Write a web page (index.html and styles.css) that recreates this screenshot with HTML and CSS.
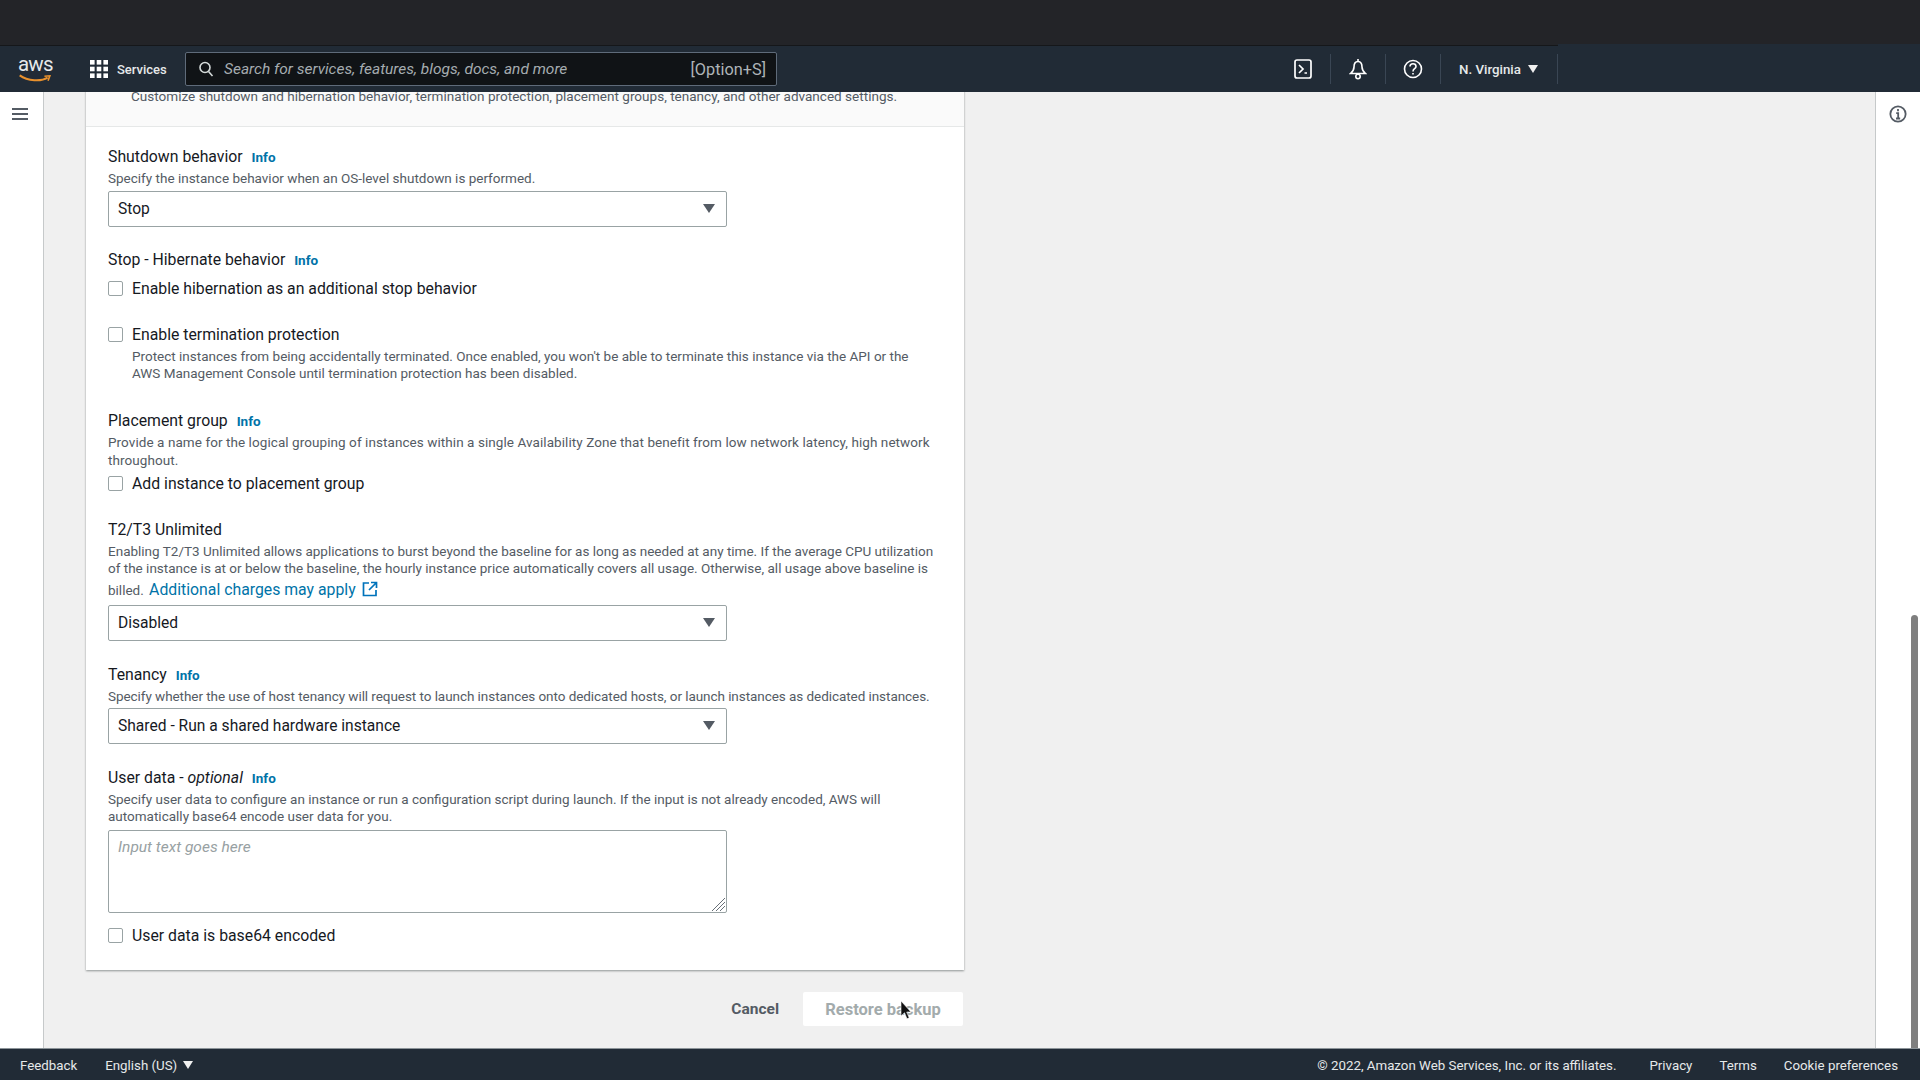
FILE: index.html
```html
<!DOCTYPE html>
<html lang="en">
<head>
<meta charset="utf-8">
<title>Restore backup</title>
<link rel="stylesheet" href="styles.css">
</head>
<body>
<div class="chrome"></div>
<header class="nav">
  <div class="logo">
    <span class="logo-text">aws</span>
    <svg class="smile" viewBox="0 0 36 10" width="34" height="9"><path d="M1 1.500C10 8 25 8.500 32 4" fill="none" stroke="#e8912d" stroke-width="2.200"/><path d="M28.500 2.500L34.500 2L32.500 7.500" fill="none" stroke="#e8912d" stroke-width="1.800"/></svg>
  </div>
  <div class="services">
    <svg class="grid-icon" viewBox="0 0 18 18" width="18" height="18" fill="#fff"><rect x="0" y="0" width="4.600" height="4.600"/><rect x="6.700" y="0" width="4.600" height="4.600"/><rect x="13.400" y="0" width="4.600" height="4.600"/><rect x="0" y="6.700" width="4.600" height="4.600"/><rect x="6.700" y="6.700" width="4.600" height="4.600"/><rect x="13.400" y="6.700" width="4.600" height="4.600"/><rect x="0" y="13.400" width="4.600" height="4.600"/><rect x="6.700" y="13.400" width="4.600" height="4.600"/><rect x="13.400" y="13.400" width="4.600" height="4.600"/></svg>
    <span>Services</span>
  </div>
  <div class="search">
    <svg viewBox="0 0 16 16" width="16" height="16" fill="none" stroke="#d5dbdb" stroke-width="1.600"><circle cx="7" cy="6.500" r="5"/><path d="M10.500 10.500L14.500 15"/></svg>
    <span class="search-text">Search for services, features, blogs, docs, and more</span>
    <span class="search-key">[Option+S]</span>
  </div>
  <div class="nav-right">
    <div class="nav-cell">
      <svg viewBox="0 0 18 20" width="18" height="20" fill="none" stroke="#fff" stroke-width="1.700"><rect x="1" y="1" width="16" height="18" rx="2"/><path d="M5 6l4 4-4 4M10.500 14h2.500"/></svg>
    </div>
    <div class="nav-cell">
      <svg viewBox="0 0 18 22" width="18" height="22" fill="none" stroke="#fff" stroke-width="1.600"><path d="M9 1v2.500M9 3.500C6 3.500 5 6 5 9c0 2.500-1.200 4.500-3.500 6.500h15C14.200 13.500 13 11.500 13 9c0-3-1-5.500-4-5.500z"/><circle cx="9" cy="18.500" r="2.200"/></svg>
    </div>
    <div class="nav-cell">
      <svg viewBox="0 0 20 20" width="20" height="20" fill="none" stroke="#fff" stroke-width="1.600"><circle cx="10" cy="10" r="8.500"/><path d="M7 7.500C7 5.500 8.500 4.800 10 4.800s3 .9 3 2.600c0 2.400-3 2.300-3 5"/><path d="M10 14v1.600"/></svg>
    </div>
    <div class="region"><span>N. Virginia</span><i class="tri tri-light"></i></div>
  </div>
</header>
<div class="body">
  <aside class="side">
    <svg viewBox="0 0 16 14" width="16" height="14" fill="none" stroke="#545b64" stroke-width="2"><path d="M0 2h16M0 7h16M0 12h16"/></svg>
  </aside>
  <main class="main">
    <section class="card">
      <div class="card-head">Customize shutdown and hibernation behavior, termination protection, placement groups, tenancy, and other advanced settings.</div>
      <div class="card-body">
        <div class="label">Shutdown behavior <a class="info">Info</a></div>
        <p class="desc">Specify the instance behavior when an OS-level shutdown is performed.</p>
        <div class="select"><span>Stop</span><i class="tri"></i></div>

        <div class="label gap-stop">Stop - Hibernate behavior <a class="info">Info</a></div>
        <label class="check check-tight"><i class="box"></i><span>Enable hibernation as an additional stop behavior</span></label>

        <label class="check check-solo"><i class="box"></i><span>Enable termination protection</span></label>
        <p class="desc desc-in">Protect instances from being accidentally terminated. Once enabled, you won't be able to terminate this instance via the API or the AWS Management Console until termination protection has been disabled.</p>

        <div class="label gap-lg">Placement group <a class="info">Info</a></div>
        <p class="desc desc-wide">Provide a name for the logical grouping of instances within a single Availability Zone that benefit from low network latency, high network throughout.</p>
        <label class="check check-small"><i class="box"></i><span>Add instance to placement group</span></label>

        <div class="label gap-t2">T2/T3 Unlimited</div>
        <p class="desc">Enabling T2/T3 Unlimited allows applications to burst beyond the baseline for as long as needed at any time. If the average CPU utilization of the instance is at or below the baseline, the hourly instance price automatically covers all usage. Otherwise, all usage above baseline is billed. <a class="ext">Additional charges may apply <svg viewBox="0 0 16 16" width="16" height="16" fill="none" stroke="#0073bb" stroke-width="1.700"><path d="M7 2H1.500v12.500H14V9M9 1.500h5.500V7M14.500 1.500L7 9"/></svg></a></p>
        <div class="select"><span>Disabled</span><i class="tri"></i></div>

        <div class="label gap">Tenancy <a class="info">Info</a></div>
        <p class="desc desc-tight">Specify whether the use of host tenancy will request to launch instances onto dedicated hosts, or launch instances as dedicated instances.</p>
        <div class="select select-tight"><span>Shared - Run a shared hardware instance</span><i class="tri"></i></div>

        <div class="label gap">User data - <em>optional</em> <a class="info">Info</a></div>
        <p class="desc">Specify user data to configure an instance or run a configuration script during launch. If the input is not already encoded, AWS will automatically base64 encode user data for you.</p>
        <div class="textarea"><span>Input text goes here</span>
          <svg class="grip" viewBox="0 0 14 14" width="14" height="14" stroke="#687078" stroke-width="1"><path d="M1 14L14 1M5 14l9-9M9 14l5-5"/></svg>
        </div>
        <label class="check check-small2"><i class="box"></i><span>User data is base64 encoded</span></label>
      </div>
    </section>
    <div class="actions">
      <a class="cancel">Cancel</a>
      <div class="restore">Restore backup</div>
    </div>
    <svg class="cursor" viewBox="0 0 12 20" width="12" height="20"><path d="M1 1v15l3.500-3.200 2.500 6 2.200-1-2.500-5.800H11z" fill="#111" stroke="#fff" stroke-width=".6"/></svg>
  </main>
  <aside class="rail">
    <svg viewBox="0 0 20 20" width="18" height="18" fill="none" stroke="#545b64" stroke-width="2"><circle cx="10" cy="10" r="8.500"/><path d="M10 4.500v2.500M8 9h2.200v6M7.800 15h4.600"/></svg>
    <div class="scrollbar"></div>
  </aside>
</div>
<footer class="foot">
  <div class="foot-left"><span>Feedback</span><span class="lang">English (US) <i class="tri tri-light tri-small"></i></span></div>
  <div class="foot-right"><span>© 2022, Amazon Web Services, Inc. or its affiliates.</span><span>Privacy</span><span>Terms</span><span>Cookie preferences</span></div>
</footer>
</body>
</html>
```
FILE: styles.css
```css
* { box-sizing: border-box; }
html, body { margin: 0; height: 100%; }
body {
  display: flex;
  flex-direction: column;
  height: 1080px;
  overflow: hidden;
  font-family: Roboto, "Liberation Sans", sans-serif;
  color: #16191f;
  background: #f0f0f0;
}
.chrome { height: 46px; flex: none; background: #232428; border-bottom: 1px solid #15171a; }
.nav {
  height: 46px;
  flex: none;
  display: flex;
  align-items: center;
  background: #212b36;
  color: #fff;
  position: relative;
  padding-left: 18px;
}
.nav::after {
  content: "";
  position: absolute;
  left: 1558px;
  right: 0;
  top: -2px;
  height: 2px;
  background: #212b36;
}
.logo { width: 72px; display: flex; flex-direction: column; line-height: 1; }
.logo-text { font-size: 20.500px; color: #e6e9ea; line-height: 17px; letter-spacing: -.8px; }
.smile { margin-top: 1px; display: block; }
.services { display: flex; align-items: center; gap: 9px; width: 95px; font-size: 13px; font-weight: 500; color: #e6e9ea; }
.search {
  width: 592px;
  height: 34px;
  background: #101316;
  border: 1px solid #5f6b7a;
  border-radius: 2px;
  display: flex;
  align-items: center;
  padding: 0 10px 0 12px;
  color: #a5acb0;
  font-size: 15.500px;
}
.search svg { margin-right: 10px; flex: none; }
.search-text { font-style: italic; flex: 1; }
.search-key { color: #aeb4b8; font-size: 16.300px; }
.nav-right { margin-left: auto; display: flex; align-items: center; height: 30px; margin-right: 362px; }
.nav-cell { width: 55px; height: 30px; display: flex; align-items: center; justify-content: center; border-right: 1px solid #3a4654; }
.region { height: 30px; width: 117px; padding-left: 18px; display: flex; align-items: center; gap: 7px; font-size: 13.300px; font-weight: 500; color: #e6e9ea; border-right: 1px solid #3a4654; }
.tri { display: block; width: 0; height: 0; border-left: 6px solid transparent; border-right: 6px solid transparent; border-top: 9px solid #545b64; }
.tri-light { border-top-color: #f0f0f0; border-left-width: 5px; border-right-width: 5px; border-top-width: 8px; }
.tri-small { display: inline-block; vertical-align: 1px; margin-left: 2px; }
.body { flex: 1; min-height: 0; display: flex; }
.side { width: 44px; flex: none; background: #fff; border-right: 1px solid #c6c9ca; padding: 15px 0 0 12px; }
.side svg { display: block; }
.main { flex: 1; min-width: 0; overflow: hidden; padding-left: 42px; position: relative; }
.card { width: 878px; background: #fff; box-shadow: 0 1px 2px #8f9494; }
.card-head {
  margin-top: -5px;
  padding: 0 0 20px 45px;
  background: #fafafa;
  border-bottom: 1px solid #e6e8e8;
  color: #545b64;
  font-size: 13.560px;
  line-height: 19px;
}
.card-body { padding: 19px 22px 24px 22px; }
.label { font-size: 15.800px; line-height: 22px; color: #16191f; }
.label em { font-style: italic; }
.info { font-size: 13.500px; font-weight: 700; color: #0073a8; margin-left: 5px; }
.desc { margin: 2px 0 0; font-size: 13.500px; line-height: 17.700px; color: #545b64; }
.desc-in { margin-left: 24px; max-width: 800px; }
.desc-wide { letter-spacing: .07px; }
.desc-tight { letter-spacing: -.06px; }
.ext { color: #0073a8; font-size: 15.800px; line-height: 24px; margin-left: 2px; }
.ext svg { vertical-align: -2px; margin-left: 2px; }
.select {
  margin-top: 3px;
  width: 619px;
  height: 36px;
  background: #fff;
  border: 1px solid #99a3a4;
  border-radius: 2px;
  display: flex;
  align-items: center;
  justify-content: space-between;
  padding: 0 11px 0 9px;
  font-size: 15.600px;
}
.select-tight { margin-top: 2px; }
.gap { margin-top: 23px; }
.gap-stop { margin-top: 22px; }
.gap-lg { margin-top: 27px; }
.gap-t2 { margin-top: 24px; }
.check { display: flex; align-items: center; gap: 9px; height: 22px; font-size: 15.800px; }
.check-tight { margin-top: 7px; }
.check-solo { margin-top: 24px; }
.check-small { margin-top: 3px; }
.check-small2 { margin-top: 11px; }
.box { display: block; width: 15px; height: 15px; border: 1px solid #99a3a4; border-radius: 2px; background: #fff; flex: none; }
.textarea {
  margin-top: 4px;
  width: 619px;
  height: 83px;
  border: 1px solid #99a3a4;
  border-radius: 2px;
  padding: 7px 9px;
  font-size: 15.500px;
  font-style: italic;
  color: #98a1a3;
  position: relative;
}
.grip { position: absolute; right: 1px; bottom: 1px; }
.actions { width: 877px; margin-top: 22px; display: flex; justify-content: flex-end; align-items: center; gap: 24px; }
.cancel { font-size: 15.500px; font-weight: 700; color: #545b64; }
.restore {
  width: 160px;
  height: 34px;
  background: #fff;
  border-radius: 2px;
  display: flex;
  align-items: center;
  justify-content: center;
  font-size: 16.500px;
  font-weight: 700;
  color: #a3abac;
}
.cursor { position: absolute; left: 856px; top: 908px; }
.rail { width: 45px; flex: none; background: #fff; border-left: 1px solid #c6c9ca; padding: 13px 0 0 13px; position: relative; }
.rail svg { display: block; }
.scrollbar { position: absolute; right: 2px; top: 523px; bottom: 0; width: 7px; background: #7f7f7f; border-radius: 4px 4px 0 0; }
.foot {
  height: 32px;
  flex: none;
  background: #212b36;
  border-top: 1px solid #8c9499;
  color: #e6e9ea;
  font-size: 13.300px;
  display: flex;
  align-items: center;
  justify-content: space-between;
  padding: 1px 22px 0 20px;
}
.foot-left { display: flex; gap: 28px; }
.foot-right { display: flex; gap: 27px; }
.foot-right span:first-child { margin-right: 6px; }
```
